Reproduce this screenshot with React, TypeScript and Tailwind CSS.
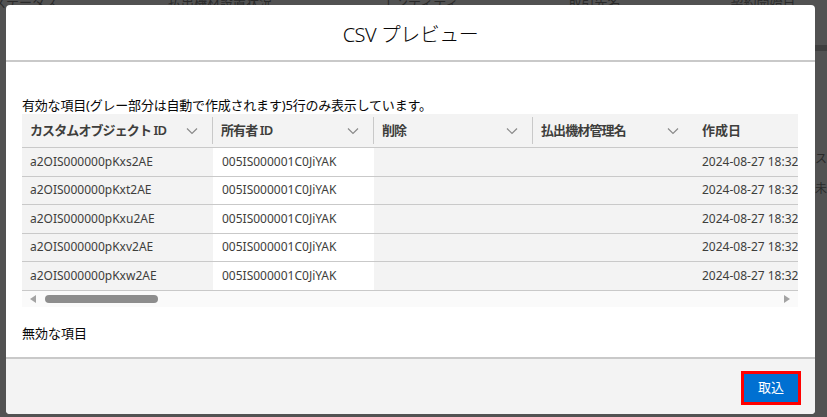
import React from "react";

const rows = [
  "a2OIS000000pKxs2AE",
  "a2OIS000000pKxt2AE",
  "a2OIS000000pKxu2AE",
  "a2OIS000000pKxv2AE",
  "a2OIS000000pKxw2AE",
];

const Chevron = () => (
  <svg width="12" height="8" viewBox="0 0 12 8" className="shrink-0">
    <path d="M1 1.5 L6 6.5 L11 1.5" fill="none" stroke="#8a8a8a" strokeWidth="1.2" />
  </svg>
);

const cols = [
  { name: "カスタムオブジェクト ID", w: "w-[191px]" },
  { name: "所有者 ID", w: "w-[161px]" },
  { name: "削除", w: "w-[159px]" },
  { name: "払出機材管理名", w: "w-[160px]" },
];

export default function App() {
  return (
    <div
      className="relative w-[827px] h-[417px] bg-[#525252] overflow-hidden"
      style={{ fontFamily: '"Noto Sans", "Noto Sans CJK JP", sans-serif' }}
    >
      {/* background page hints */}
      <div className="absolute left-0 top-[-7px] flex gap-[110px] text-[13px] text-[#2a2a2a] whitespace-nowrap">
        <span className="ml-[-20px]">のステータス</span>
        <span>払出機材設置状況</span>
        <span>エンティティ</span>
        <span>取引先名</span>
        <span>契約開始日</span>
        <span>契約期間満了日</span>
      </div>
      <div className="absolute right-0 top-[45px] w-[12px] h-[6px] bg-[#3f3f3f]" />
      <div className="absolute right-0 top-[150px] text-[12px] text-[#2a2a2a] w-[12px] overflow-hidden whitespace-nowrap">ステ</div>
      <div className="absolute right-0 top-[180px] text-[12px] text-[#2a2a2a] w-[12px] overflow-hidden whitespace-nowrap">未対</div>

      {/* modal */}
      <div className="absolute left-[6px] top-[5px] w-[809px] h-[409px] bg-white rounded-[4px] flex flex-col overflow-hidden">
        <div className="h-[57px] flex items-center justify-center border-b-2 border-[#c9c9c9] shrink-0">
          <span className="text-[20px] font-light text-[#080707] tracking-tight mt-[4px]">CSV プレビュー</span>
        </div>
        <div className="flex-1 px-[16px] pt-[35px]">
          <div className="text-[13px] leading-[17px] text-[#080707] tracking-[-0.2px]">
            有効な項目(グレー部分は自動で作成されます)5行のみ表示しています。
          </div>
          <div className="w-[776px] overflow-hidden">
            <div className="w-[900px]">
              <div className="flex h-[34px] bg-[#f3f3f3] border-b border-[#c9c9c9]">
                {cols.map((c, i) => (
                  <div key={i} className={`${c.w} shrink-0 flex items-center py-[3px]`}>
                    <div className={`flex-1 h-full flex items-center justify-between pl-[8px] pr-[14px] ${i < 3 ? "border-r border-[#c9c9c9]" : ""}`}>
                      <span className="text-[13px] font-semibold text-[#3e3e3c] tracking-[-0.9px]">{c.name}</span>
                      <Chevron />
                    </div>
                  </div>
                ))}
                <div className="flex items-center pl-[9px] text-[13px] font-semibold text-[#3e3e3c]">作成日</div>
              </div>
              {rows.map((r) => (
                <div key={r} className="flex h-[28.5px] border-b border-[#c9c9c9] text-[12px] text-[#3e3e3c]">
                  <div className="w-[191px] shrink-0 bg-[#f3f3f3] flex items-center pl-[8px]">{r}</div>
                  <div className="w-[161px] shrink-0 bg-white flex items-center pl-[9px]">005IS000001C0JiYAK</div>
                  <div className="w-[159px] shrink-0 bg-[#f3f3f3]" />
                  <div className="w-[160px] shrink-0 bg-[#f3f3f3]" />
                  <div className="flex-1 bg-[#f3f3f3] flex items-center pl-[9px]">2024-08-27 18:32:00</div>
                </div>
              ))}
            </div>
            <div className="relative h-[16px] bg-[#fafafa]">
              <svg className="absolute left-[8px] top-[4px]" width="6" height="8" viewBox="0 0 6 8">
                <path d="M6 0 L0 4 L6 8 Z" fill="#a3a3a3" />
              </svg>
              <div className="absolute left-[23px] top-[4px] w-[113px] h-[8px] rounded-full bg-[#8d8d8d]" />
              <svg className="absolute right-[8px] top-[4px]" width="6" height="8" viewBox="0 0 6 8">
                <path d="M0 0 L6 4 L0 8 Z" fill="#a3a3a3" />
              </svg>
            </div>
          </div>
          <div className="mt-[17px] text-[13px] text-[#080707]">無効な項目</div>
        </div>
        <div className="h-[57px] shrink-0 bg-[#f3f3f3] border-t-2 border-[#c9c9c9] flex items-center justify-end pr-[14px]">
          <div className="border-[3px] border-[#ff0000] mt-[2px]">
            <button className="w-[54px] h-[28px] bg-[#0070d2] text-white text-[13px] flex items-center justify-center">
              取込
            </button>
          </div>
        </div>
      </div>
    </div>
  );
}
